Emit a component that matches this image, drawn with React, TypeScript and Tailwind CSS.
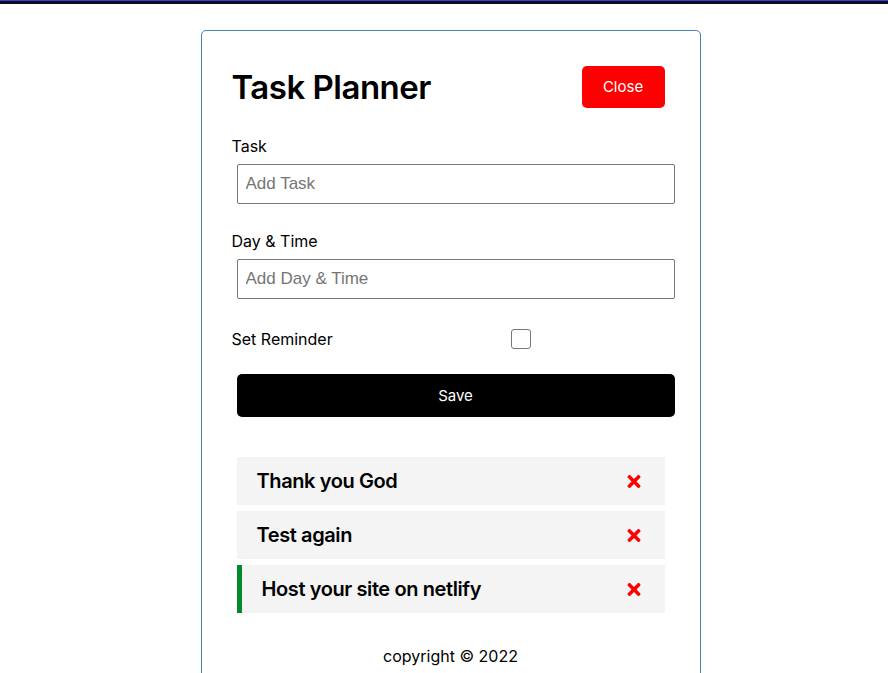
const tasks = [
  { id: 1, text: "Thank you God", reminder: false },
  { id: 2, text: "Test again", reminder: false },
  { id: 3, text: "Host your site on netlify", reminder: true },
];

const TimesIcon = () => (
  <svg viewBox="0 0 352 512" className="w-[14px] h-[19px]" fill="#ff0000">
    <path d="M242.72 256l100.07-100.07c12.28-12.28 12.28-32.19 0-44.48l-22.24-22.24c-12.28-12.28-32.19-12.28-44.48 0L176 189.28 75.93 89.21c-12.28-12.28-32.19-12.28-44.48 0L9.21 111.45c-12.28 12.28-12.28 32.19 0 44.48L109.28 256 9.21 356.07c-12.28 12.28-12.28 32.19 0 44.48l22.24 22.24c12.28 12.28 32.2 12.28 44.48 0L176 322.72l100.07 100.07c12.28 12.28 32.2 12.28 44.48 0l22.24-22.24c12.28-12.28 12.28-32.19 0-44.48L242.72 256z" />
  </svg>
);

const App = () => {
  return (
    <div
      className="min-h-[673px] bg-white text-black"
      style={{ fontFamily: "Inter, 'Open Sans', sans-serif" }}
    >
      <div className="h-px bg-[#3447d8]" />
      <div className="h-[3px] bg-[#0d0d1c]" />
      <div className="pl-[13px]">
        <div className="w-[500px] mx-auto mt-[26px] border border-[#4682b4] rounded-[5px] px-[30px] pt-[30px] pb-[30px]">
          <header className="flex items-center justify-between h-[52px]">
            <h1 className="text-[33px] font-semibold tracking-[-0.5px] leading-none">
              Task Planner
            </h1>
            <button className="mr-[5px] w-[83px] h-[42px] bg-[#ff0000] text-white text-[15px] rounded-[5px] pt-px">
              Close
            </button>
          </header>

          <form className="mt-[20px]">
            <div>
              <label className="block text-[16px] leading-[26px]">Task</label>
              <input
                type="text"
                placeholder="Add Task"
                className="block mt-[5px] ml-[5px] w-full h-[40px] border border-[#767676] rounded-[2px] px-[8px] text-[17px] placeholder:text-[#757575] outline-none"
                style={{ fontFamily: "'Liberation Sans', Arial, sans-serif" }}
              />
            </div>
            <div className="mt-[24px]">
              <label className="block text-[16px] leading-[26px]">Day &amp; Time</label>
              <input
                type="text"
                placeholder="Add Day & Time"
                className="block mt-[5px] ml-[5px] w-full h-[40px] border border-[#767676] rounded-[2px] px-[8px] text-[17px] placeholder:text-[#757575] outline-none"
                style={{ fontFamily: "'Liberation Sans', Arial, sans-serif" }}
              />
            </div>
            <div className="mt-[27px] flex items-center h-[26px]">
              <label className="flex-1 text-[16px] leading-[26px]">Set Reminder</label>
              <div className="flex-[2] flex justify-center pr-[4px]">
                <input
                  type="checkbox"
                  className="appearance-none w-[20px] h-[20px] border border-[#767676] rounded-[3px] bg-white"
                />
              </div>
            </div>
            <button
              type="button"
              className="block mt-[22px] ml-[5px] w-full h-[43px] bg-black text-white text-[15px] rounded-[5px] pt-[2px]"
            >
              Save
            </button>
          </form>

          <div className="mt-[40px] flex flex-col gap-[6px] px-[5px]">
            {tasks.map((task) => (
              <div
                key={task.id}
                className={`flex items-center justify-between h-[48px] bg-[#f4f4f4] pr-[24px] pl-[20px] ${
                  task.reminder ? "border-l-[5px] border-[#008a2e]" : ""
                }`}
              >
                <h3 className="text-[20px] font-semibold tracking-[-0.4px]">{task.text}</h3>
                <TimesIcon />
              </div>
            ))}
          </div>

          <footer className="mt-[31px] text-center text-[16px] leading-[24px]">
            <p>copyright © 2022</p>
          </footer>
        </div>
      </div>
    </div>
  );
};

export default App;
